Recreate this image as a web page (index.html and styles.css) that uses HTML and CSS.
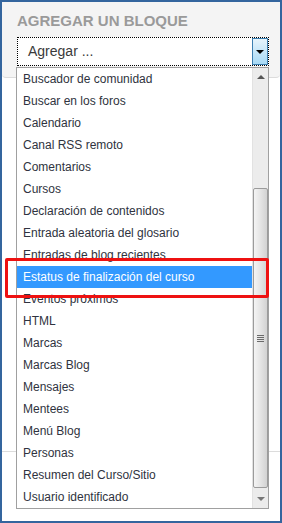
FILE: index.html
```html
<!DOCTYPE html>
<html lang="es">
<head>
    <meta charset="UTF-8">
    <meta name="viewport" content="width=device-width, initial-scale=1.0">
    <title>Agregar un bloque</title>
    <link rel="stylesheet" href="styles.css">
</head>
<body>
    <div class="frame">
        <div class="panel">
            <h2 class="panel-title">Agregar un bloque</h2>
            <div class="select">
                <span class="select-text">Agregar ...</span>
                <span class="select-btn"><span class="arrow-down"></span></span>
            </div>
        </div>
        <div class="next-block"></div>

        <div class="dropdown">
            <ul class="options">
                <li>Buscador de comunidad</li>
                <li>Buscar en los foros</li>
                <li>Calendario</li>
                <li>Canal RSS remoto</li>
                <li>Comentarios</li>
                <li>Cursos</li>
                <li>Declaración de contenidos</li>
                <li>Entrada aleatoria del glosario</li>
                <li>Entradas de blog recientes</li>
                <li class="selected">Estatus de finalización del curso</li>
                <li>Eventos próximos</li>
                <li>HTML</li>
                <li>Marcas</li>
                <li>Marcas Blog</li>
                <li>Mensajes</li>
                <li>Mentees</li>
                <li>Menú Blog</li>
                <li>Personas</li>
                <li>Resumen del Curso/Sitio</li>
                <li>Usuario identificado</li>
            </ul>
            <div class="scrollbar">
                <span class="sb-up"></span>
                <div class="sb-thumb">
                    <span class="grip"></span>
                </div>
                <span class="sb-down"></span>
            </div>
        </div>

        <div class="highlight-box"></div>
    </div>
</body>
</html>
```

FILE: styles.css
```css
body {
    margin: 0;
    font-family: "Liberation Sans", Arial, sans-serif;
}
.frame {
    position: relative;
    width: 282px;
    height: 523px;
    box-sizing: border-box;
    border: 2px solid #34659e;
    background: #fff;
    overflow: hidden;
}
.panel {
    height: 76px;
    box-sizing: border-box;
    padding: 10px 0 0 15px;
    background: #f4f4f4;
    border-bottom: 1px solid #dcdcdc;
    border-radius: 0 0 4px 4px;
}
.panel-title {
    margin: 0;
    font-size: 15px;
    line-height: 18px;
    font-weight: bold;
    color: #9a9a9a;
    text-transform: uppercase;
}
.select {
    display: flex;
    align-items: stretch;
    width: 252px;
    height: 29px;
    margin-top: 7px;
    box-sizing: border-box;
    border: 1px dotted #000;
    background: #fff;
}
.select-text {
    flex: 1;
    padding-left: 10px;
    font-size: 14px;
    line-height: 27px;
    color: #3a3a3a;
}
.select-btn {
    width: 16px;
    box-sizing: border-box;
    border: 1px solid #3c7fb1;
    background: linear-gradient(#e6f4fc, #a7d9f5);
    display: flex;
    align-items: center;
    justify-content: center;
}
.arrow-down {
    width: 0;
    height: 0;
    border-left: 4px solid transparent;
    border-right: 4px solid transparent;
    border-top: 4px solid #000;
}
.next-block {
    margin-top: 373px;
    border-top: 1px solid #dcdcdc;
}
.dropdown {
    position: absolute;
    left: 14px;
    top: 65px;
    width: 253px;
    height: 442px;
    box-sizing: border-box;
    border: 1px solid #a0a0a0;
    background: #fff;
    display: flex;
}
.options {
    list-style: none;
    margin: 0;
    padding: 0;
    width: 235px;
}
.options li {
    height: 22px;
    line-height: 22px;
    padding-left: 6px;
    font-size: 12px;
    color: #2f3340;
    white-space: nowrap;
    overflow: hidden;
}
.options li.selected {
    background: #3399ff;
    color: #fff;
}
.scrollbar {
    position: relative;
    width: 16px;
    background: #ececec;
    border-left: 1px solid #e2e2e2;
    box-sizing: border-box;
}
.sb-up, .sb-down {
    position: absolute;
    left: 4px;
    width: 0;
    height: 0;
    border-left: 4px solid transparent;
    border-right: 4px solid transparent;
}
.sb-up {
    top: 7px;
    border-bottom: 4px solid #555;
}
.sb-down {
    bottom: 7px;
    border-top: 4px solid #777;
}
.sb-thumb {
    position: absolute;
    left: 0;
    top: 120px;
    width: 15px;
    height: 300px;
    box-sizing: border-box;
    border: 1px solid #9b9b9b;
    border-radius: 2px;
    background: linear-gradient(to right, #f4f4f4, #e6e6e6 45%, #d2d2d2);
    display: flex;
    align-items: center;
    justify-content: center;
}
.grip {
    width: 7px;
    height: 7px;
    background: repeating-linear-gradient(#6a6a6a 0, #6a6a6a 1px, transparent 1px, transparent 2px);
}
.highlight-box {
    position: absolute;
    left: 3px;
    top: 256px;
    width: 264px;
    height: 40px;
    box-sizing: border-box;
    border: 3px solid #ee1111;
    border-radius: 2px;
}
```
